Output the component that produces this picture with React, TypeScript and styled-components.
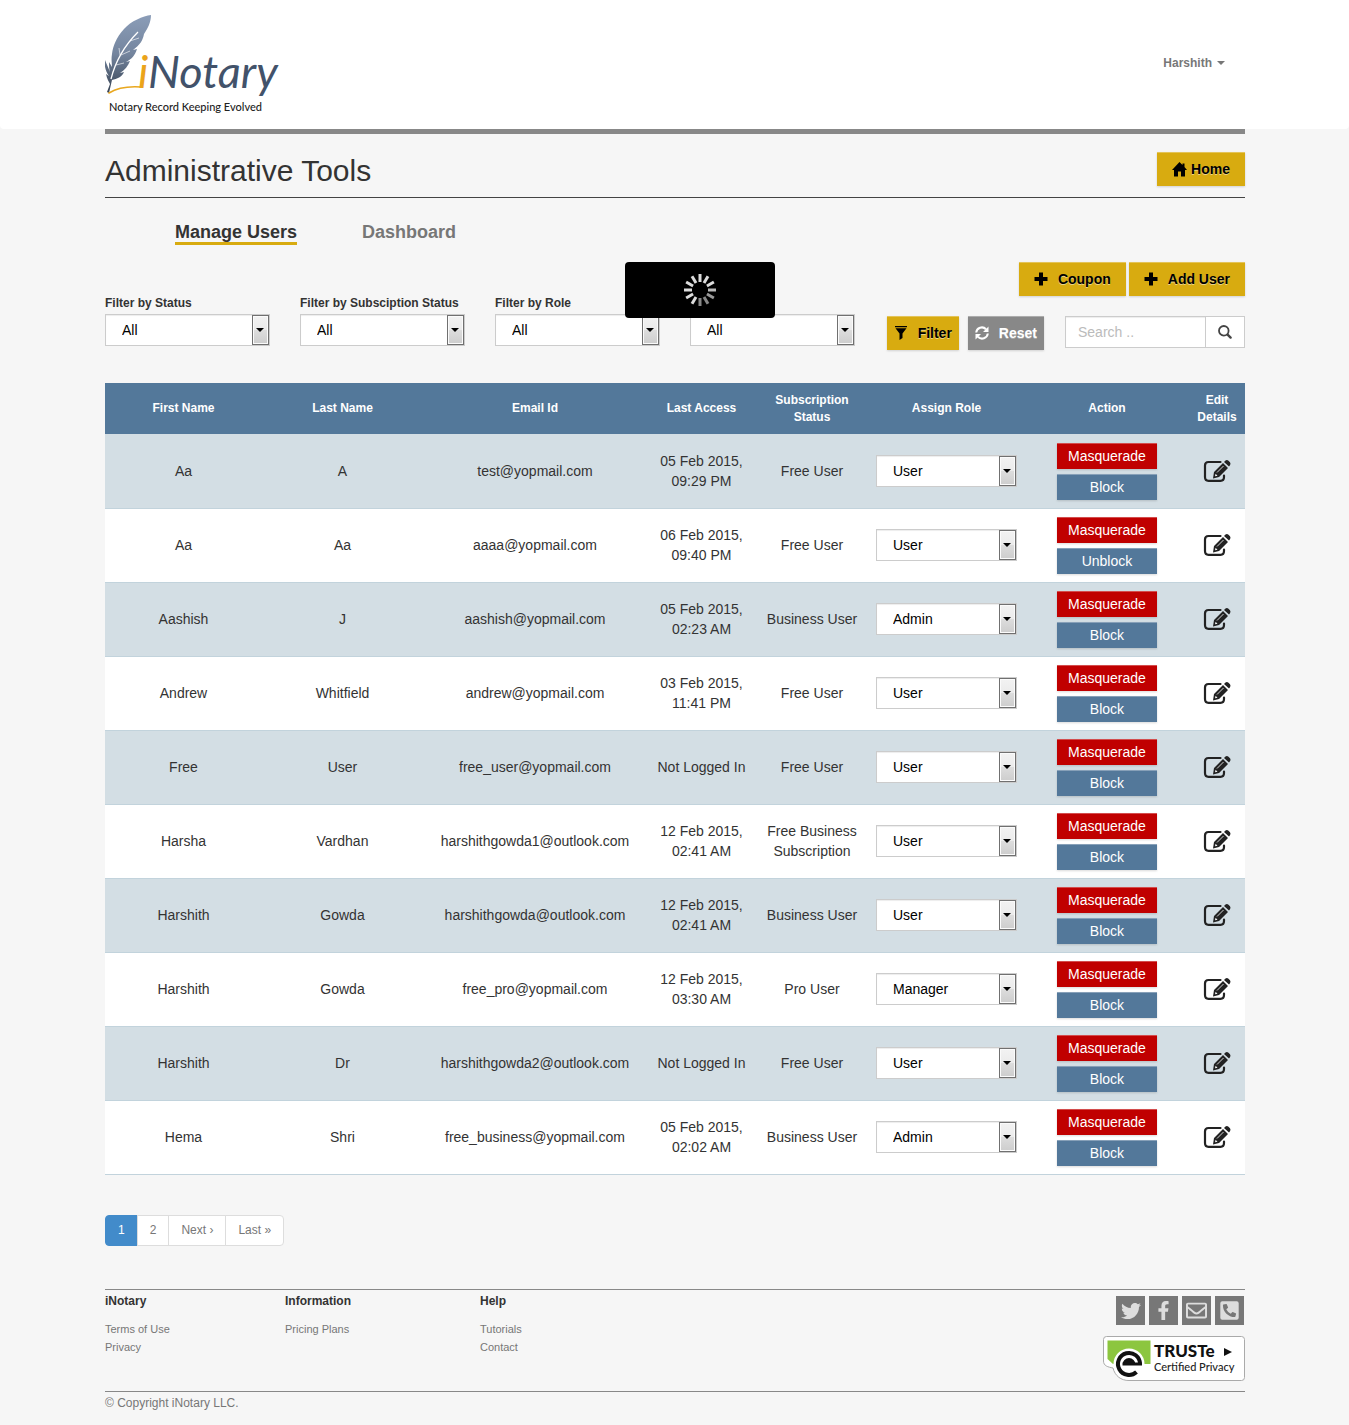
import React from "react";
import styled, { createGlobalStyle } from "styled-components";
import { FaTwitter, FaFacebookF, FaRegEnvelope, FaPhoneSquareAlt } from "react-icons/fa";

const GlobalStyle = createGlobalStyle`
  *, *::before, *::after { box-sizing: border-box; }
  body {
    margin: 0;
    background: #f6f6f6;
    color: #333;
    font-family: "Liberation Sans", Arial, sans-serif;
    font-size: 14px;
    line-height: 20px;
  }
  a { color: inherit; text-decoration: none; }
  button, input, select { font: inherit; color: inherit; margin: 0; }
`;

const Container = styled.div`
  max-width: 1171px;
  margin: 0 auto;
  padding: 0 15px 0 16px;
`;

const Header = styled.header`
  background: #fff;
  border-radius: 0 0 4px 4px;
`;

const HeaderRow = styled(Container)`
  display: flex;
  justify-content: space-between;
  align-items: flex-start;
  height: 129px;
  padding-top: 12px;
`;

const UserMenu = styled.button`
  display: flex;
  align-items: center;
  gap: 5px;
  margin: 41px 20px 0 0;
  padding: 0;
  border: 0;
  background: none;
  color: #777;
  font-size: 12px;
  font-weight: bold;
`;

const Caret = styled.span`
  border: 4px solid transparent;
  border-top-color: currentColor;
  border-bottom: 0;
`;

const TitleBar = styled.div`
  display: flex;
  justify-content: space-between;
  align-items: flex-end;
  border-top: 5px solid #888;
  border-bottom: 1px solid #444;
  padding: 18px 0 11px;
`;

const Title = styled.h1`
  margin: 0;
  font-size: 30px;
  line-height: 30px;
  font-weight: normal;
`;

const tones = {
  gold: { bg: "#d8ab10", fg: "#000", shadow: "rgba(255,255,255,.5)", weight: "bold" },
  grey: { bg: "#888", fg: "#fff", shadow: "rgba(255,255,255,.3)", weight: "bold" },
  red: { bg: "#c00000", fg: "#fff", shadow: "transparent", weight: "normal" },
  blue: { bg: "#53789a", fg: "#fff", shadow: "transparent", weight: "normal" },
};
type Tone = keyof typeof tones;

const Button = styled.button<{ $tone: Tone; $pad?: number; $gap?: number }>`
  display: inline-flex;
  align-items: center;
  justify-content: center;
  gap: ${(p) => p.$gap ?? 10}px;
  height: 34px;
  padding: 0 ${(p) => p.$pad ?? 15}px;
  border: 0;
  background: ${(p) => tones[p.$tone].bg};
  color: ${(p) => tones[p.$tone].fg};
  font-weight: ${(p) => tones[p.$tone].weight};
  text-shadow: 0 1px 0 ${(p) => tones[p.$tone].shadow};
  box-shadow: inset 0 1px 0 rgba(255, 255, 255, 0.3), 0 1px 2px rgba(0, 0, 0, 0.15);
  white-space: nowrap;
`;

const SmallButton = styled(Button)`
  width: 100px;
  height: 26px;
  padding: 0;
`;

const Tabs = styled.nav`
  display: flex;
  gap: 65px;
  padding: 24px 70px 17px;
`;

const Tab = styled.a<{ $active?: boolean }>`
  font-size: 18px;
  line-height: 20px;
  font-weight: bold;
  color: ${(p) => (p.$active ? "#333" : "#777")};
  border-bottom: 3px solid ${(p) => (p.$active ? "#d8ab10" : "transparent")};
`;

const Toolbar = styled.form`
  display: flex;
  justify-content: space-between;
  align-items: flex-start;
  position: relative;
  height: 121px;
`;

const Filters = styled.div`
  display: flex;
  gap: 30px;
  padding-top: 33px;
`;

const Field = styled.div`
  display: flex;
  flex-direction: column;
  gap: 3px;
  width: 165px;
`;

const Label = styled.label`
  font-size: 12px;
  line-height: 16px;
  font-weight: bold;
`;

const SelectBox = styled.span`
  display: block;
  position: relative;
  width: 100%;
  height: 32px;
  &::before {
    content: "";
    position: absolute;
    top: 1px;
    right: 1px;
    width: 17px;
    height: 30px;
    border: 1px solid #707070;
    box-shadow: inset 0 0 0 1px #fbfbfb;
    background: linear-gradient(#f2f2f2, #ebebeb 50%, #dddddd 50%, #cdcdcd);
    pointer-events: none;
  }
  &::after {
    content: "";
    position: absolute;
    top: 14px;
    right: 6px;
    border: 4px solid transparent;
    border-top-color: #000;
    border-bottom: 0;
    pointer-events: none;
  }
`;

const SelectControl = styled.select`
  appearance: none;
  display: block;
  width: 100%;
  height: 32px;
  padding: 0 24px 0 16px;
  border: 1px solid #ccc;
  border-radius: 0;
  background: #fff;
  color: #000;
  box-shadow: inset 0 1px 1px rgba(0, 0, 0, 0.075);
`;

const Tools = styled.div`
  display: flex;
  flex-direction: column;
  align-items: flex-end;
  gap: 20px;
`;

const ToolRow = styled.div<{ $gap: number }>`
  display: flex;
  align-items: flex-start;
  gap: ${(p) => p.$gap}px;
`;

const SearchGroup = styled.div`
  display: flex;
  width: 180px;
  height: 32px;
  margin-left: 12px;
  border: 1px solid #ccc;
  background: #fff;
  box-shadow: inset 0 1px 1px rgba(0, 0, 0, 0.075);
`;

const SearchInput = styled.input`
  flex: 1;
  min-width: 0;
  padding: 0 12px;
  border: 0;
  background: none;
  &::placeholder { color: #bbb; opacity: 1; }
`;

const SearchButton = styled.button`
  display: flex;
  align-items: center;
  justify-content: center;
  width: 39px;
  padding: 0;
  border: 0;
  border-left: 1px solid #ccc;
  background: #fff;
  color: #444;
`;

const Loader = styled.div`
  position: absolute;
  top: 0;
  left: 520px;
  display: flex;
  align-items: center;
  justify-content: center;
  width: 150px;
  height: 56px;
  border-radius: 4px;
  background: #000;
`;

const Table = styled.table`
  width: 100%;
  table-layout: fixed;
  border-collapse: separate;
  border-spacing: 0;
  text-align: center;
`;

const Th = styled.th`
  height: 52px;
  padding: 0 8px;
  background: #53789a;
  border-bottom: 1px solid #d3dee4;
  color: #fff;
  font-size: 12px;
  line-height: 17px;
`;

const Row = styled.tr`
  background: #fff;
  &:nth-child(odd) { background: #d3dee4; }
`;

const Td = styled.td`
  padding: 7px 8px 9px;
  border-bottom: 1px solid #c2d3dc;
`;

const ActionTd = styled(Td)`
  padding: 8px;
`;

const Actions = styled.div`
  display: flex;
  flex-direction: column;
  align-items: center;
  gap: 5px;
`;

const IconLink = styled.a`
  display: flex;
  justify-content: center;
  color: #222;
`;

const Pager = styled.nav`
  display: flex;
  padding: 40px 0 43px;
`;

const PageLink = styled.a<{ $active?: boolean }>`
  padding: 6px 12px;
  margin-left: -1px;
  border: 1px solid ${(p) => (p.$active ? "#428bca" : "#ddd")};
  background: ${(p) => (p.$active ? "#428bca" : "#fff")};
  color: ${(p) => (p.$active ? "#fff" : "#777")};
  font-size: 12px;
  line-height: 17px;
  &:first-child { margin-left: 0; border-radius: 4px 0 0 4px; }
  &:last-child { border-radius: 0 4px 4px 0; }
`;

const FooterTop = styled.div`
  display: flex;
  height: 103px;
  border-top: 1px solid #888;
  border-bottom: 1px solid #888;
`;

const FooterColumn = styled.div<{ $width: number }>`
  display: flex;
  flex-direction: column;
  width: ${(p) => p.$width}px;
  font-size: 11px;
  line-height: 18px;
  color: #777;
`;

const FooterHeading = styled.h2`
  margin: 3px 0 10px;
  color: #333;
  font-size: 12px;
  line-height: 17px;
`;

const FooterAside = styled.div`
  display: flex;
  flex-direction: column;
  align-items: flex-end;
  gap: 11px;
  margin-left: auto;
  padding-top: 6px;
`;

const Social = styled.div`
  display: flex;
  gap: 4px;
  padding-right: 1px;
`;

const SocialLink = styled.a`
  display: flex;
  align-items: center;
  justify-content: center;
  width: 29px;
  height: 29px;
  background: #777;
  color: #ddd;
`;

const Copyright = styled.p`
  margin: 0;
  padding: 3px 0 13px;
  color: #777;
  font-size: 12px;
  line-height: 17px;
`;

const Logo = () => (
  <svg width="178" height="106" viewBox="0 0 178 106" role="img" aria-label="iNotary">
    <defs>
      <linearGradient id="quill" x1="0" y1="0" x2="0" y2="1">
        <stop offset="0" stopColor="#8b9db8" />
        <stop offset="0.5" stopColor="#74859e" />
        <stop offset="1" stopColor="#364253" />
      </linearGradient>
    </defs>
    <path
      fill="url(#quill)"
      d="M46 3C38 4 26 9 19 17C11 26 8 34 7 42C6 48 7 51 7 55L4 50C4 54 4 57 5 60L0 48C-1 55 1 60 4 64L1 62C2 67 4 70 5 72L2 80L4 81L7 68C12 67 17 65 19 60L15 61C20 58 23 54 25 49L21 50C27 47 30 43 32 37L28 38C35 33 38 28 39 22C43 16 46 10 46 3Z"
    />
    <path fill="none" stroke="#fff" strokeWidth="1.300" d="M6 67C10 51 18 35 33 20" />
    <path fill="none" stroke="#fff" strokeWidth="0.600" d="M15 43L14 36M16 43L25 39M25 29L34 26M11 53L19 51" />
    <path fill="none" stroke="#e9a820" strokeWidth="1.600" strokeLinecap="round" d="M4 81C12 76 22 74 36 75" />
    <text x="33" y="76" fontFamily="Lato, sans-serif" fontStyle="italic" fontSize="45">
      <tspan fill="#eba41a">i</tspan>
      <tspan fill="#42526a">Notary</tspan>
    </text>
    <text x="4" y="99" fill="#222" fontFamily="Lato, sans-serif" fontWeight="500" fontSize="11">
      Notary Record Keeping Evolved
    </text>
  </svg>
);

const HomeIcon = () => (
  <svg width="15" height="15" viewBox="0 0 15 15" fill="currentColor" aria-hidden="true">
    <path d="M7.500 0L10.500 3V1.500H12.500V5L15 8H13V14.500H9V9.500H6V14.500H2V8H0Z" />
  </svg>
);
const PlusIcon = () => (
  <svg width="14" height="14" viewBox="0 0 14 14" fill="currentColor" aria-hidden="true">
    <path d="M5 0.500H9V5H13.500V9H9V13.500H5V9H0.500V5H5Z" />
  </svg>
);
const FilterIcon = () => (
  <svg width="14" height="14" viewBox="0 0 14 14" fill="currentColor" aria-hidden="true">
    <path d="M1 0H13V1.200H1ZM1.500 2.200H12.500L8.500 7.500V12L5.500 14V7.500Z" />
  </svg>
);
const RefreshIcon = () => (
  <svg width="14" height="14" viewBox="0 0 14 14" fill="none" stroke="currentColor" strokeWidth="2" aria-hidden="true">
    <path d="M1.200 6.500A5.700 5.700 0 0 1 11 3.200M12.800 7.500A5.700 5.700 0 0 1 3 10.800" />
    <path fill="currentColor" stroke="none" d="M13.500 0.500V6H8ZM0.500 13.500V8H6Z" />
  </svg>
);
const SearchIcon = () => (
  <svg width="14" height="14" viewBox="0 0 14 14" fill="none" stroke="currentColor" aria-hidden="true">
    <circle cx="5.800" cy="5.800" r="4.800" strokeWidth="1.800" />
    <path strokeWidth="2.400" strokeLinecap="round" d="M9.600 9.600L12.600 12.600" />
  </svg>
);
const EditIcon = () => (
  <svg width="28" height="24" viewBox="0 0 28 24" aria-hidden="true">
    <path fill="none" stroke="currentColor" strokeWidth="2.200" strokeLinecap="round" d="M17.500 3H5.500Q2 3 2 6.500V18Q2 21.800 5.500 21.800H17.500Q21 21.800 21 18V16.500" />
    <path fill="currentColor" d="M10 19.500L11 13L20 4L25 9L16 18ZM21 3L22.500 1.500Q24 0.500 25.500 1.800L27 3.300Q28 4.800 27 6.200L26 7.500Z" />
    <path fill="none" stroke="#fff" strokeWidth="0.800" d="M14 13.500L20.500 7" />
    <path fill="#fff" d="M12 17.300L12.600 14.800L14.500 16.700Z" />
  </svg>
);
const Spinner = () => (
  <svg width="34" height="34" viewBox="-17 -17 34 34" aria-hidden="true">
    {Array.from({ length: 12 }, (_, i) => (
      <rect
        key={i}
        x="-1.500"
        y="-16"
        width="3"
        height="8"
        fill={i < 3 || i > 6 ? "#ddd" : ["#bbb", "#999", "#888", "#888"][i - 3]}
        transform={`rotate(${i * 30})`}
      />
    ))}
  </svg>
);
const TrusteBadge = () => (
  <svg width="142" height="46" viewBox="0 0 142 46" role="img" aria-label="TRUSTe Certified Privacy">
    <path fill="#fff" stroke="#aaa" d="M3.500 0.500H138.500Q141.500 0.500 141.500 3.500V41.500Q141.500 44.500 138.500 44.500H26C18 44.500 12 40 10 32C5 31 0.500 30 0.500 25V3.500Q0.500 0.500 3.500 0.500Z" />
    <path fill="#8cc63f" d="M4.500 4.500H47.500V28H10L4.500 23Z" />
    <circle cx="26" cy="28" r="15.500" fill="#fff" />
    <path fill="none" stroke="#111" strokeWidth="4" d="M37 28A11 11 0 1 0 33.500 36" />
    <path fill="#111" d="M19.500 28.500A6.500 6.500 0 0 1 32.500 28.500ZM19.500 26.500H39V29.500H19.500Z" />
    <text x="51" y="21" fill="#111" fontFamily="Lato, sans-serif" fontWeight="900" fontSize="17">TRUSTe</text>
    <path fill="#111" d="M121 12L129 16L121 20Z" />
    <text x="51" y="35" fill="#222" fontFamily="Lato, sans-serif" fontWeight="500" fontSize="11">Certified Privacy</text>
  </svg>
);

const Select = ({ id, label, value, options }: { id: string; label?: string; value: string; options: string[] }) => (
  <SelectBox>
    <SelectControl id={id} aria-label={label} defaultValue={value}>
      {options.map((o) => (
        <option key={o}>{o}</option>
      ))}
    </SelectControl>
  </SelectBox>
);

const filters = [
  { id: "status", label: "Filter by Status", options: ["All", "Active", "Blocked"] },
  { id: "subscription", label: "Filter by Subsciption Status", options: ["All", "Free User", "Pro User", "Business User"] },
  { id: "role", label: "Filter by Role", options: ["All", "User", "Manager", "Admin"] },
];

const columns: [string, number][] = [
  ["First Name", 157],
  ["Last Name", 161],
  ["Email Id", 224],
  ["Last Access", 109],
  ["Subscription Status", 112],
  ["Assign Role", 157],
  ["Action", 164],
  ["Edit Details", 56],
];

const users = [
  ["Aa", "A", "test@yopmail.com", "05 Feb 2015, 09:29 PM", "Free User", "User", "Block"],
  ["Aa", "Aa", "aaaa@yopmail.com", "06 Feb 2015, 09:40 PM", "Free User", "User", "Unblock"],
  ["Aashish", "J", "aashish@yopmail.com", "05 Feb 2015, 02:23 AM", "Business User", "Admin", "Block"],
  ["Andrew", "Whitfield", "andrew@yopmail.com", "03 Feb 2015, 11:41 PM", "Free User", "User", "Block"],
  ["Free", "User", "free_user@yopmail.com", "Not Logged In", "Free User", "User", "Block"],
  ["Harsha", "Vardhan", "harshithgowda1@outlook.com", "12 Feb 2015, 02:41 AM", "Free Business Subscription", "User", "Block"],
  ["Harshith", "Gowda", "harshithgowda@outlook.com", "12 Feb 2015, 02:41 AM", "Business User", "User", "Block"],
  ["Harshith", "Gowda", "free_pro@yopmail.com", "12 Feb 2015, 03:30 AM", "Pro User", "Manager", "Block"],
  ["Harshith", "Dr", "harshithgowda2@outlook.com", "Not Logged In", "Free User", "User", "Block"],
  ["Hema", "Shri", "free_business@yopmail.com", "05 Feb 2015, 02:02 AM", "Business User", "Admin", "Block"],
];

export default function App() {
  return (
    <>
      <GlobalStyle />
      <Header>
        <HeaderRow>
          <a href="#home"><Logo /></a>
          <UserMenu type="button">Harshith <Caret /></UserMenu>
        </HeaderRow>
      </Header>
      <Container as="main">
        <TitleBar>
          <Title>Administrative Tools</Title>
          <Button type="button" $tone="gold" $gap={4}><HomeIcon />Home</Button>
        </TitleBar>
        <Tabs>
          <Tab href="#users" $active>Manage Users</Tab>
          <Tab href="#dashboard">Dashboard</Tab>
        </Tabs>
        <Toolbar onSubmit={(e) => e.preventDefault()}>
          <Filters>
            {filters.map((f) => (
              <Field key={f.id}>
                <Label htmlFor={f.id}>{f.label}</Label>
                <Select id={f.id} value="All" options={f.options} />
              </Field>
            ))}
            <Field>
              <Label as="span">&nbsp;</Label>
              <Select id="access" label="Filter by Access" value="All" options={["All"]} />
            </Field>
          </Filters>
          <Tools>
            <ToolRow $gap={3}>
              <Button type="button" $tone="gold"><PlusIcon />Coupon</Button>
              <Button type="button" $tone="gold"><PlusIcon />Add User</Button>
            </ToolRow>
            <ToolRow $gap={9}>
              <Button type="submit" $tone="gold" $pad={7}><FilterIcon />Filter</Button>
              <Button type="reset" $tone="grey" $pad={7}><RefreshIcon />Reset</Button>
              <SearchGroup>
                <SearchInput type="text" aria-label="Search" placeholder="Search .." />
                <SearchButton type="button" aria-label="Search"><SearchIcon /></SearchButton>
              </SearchGroup>
            </ToolRow>
          </Tools>
          <Loader role="status" aria-label="Loading"><Spinner /></Loader>
        </Toolbar>
        <Table>
          <colgroup>
            {columns.map(([name, width]) => (
              <col key={name} style={{ width: `${(width / 1140) * 100}%` }} />
            ))}
          </colgroup>
          <thead>
            <tr>
              {columns.map(([name]) => (
                <Th key={name} scope="col">{name}</Th>
              ))}
            </tr>
          </thead>
          <tbody>
            {users.map(([first, last, email, access, plan, role, action]) => (
              <Row key={email}>
                <Td>{first}</Td>
                <Td>{last}</Td>
                <Td>{email}</Td>
                <Td>{access}</Td>
                <Td>{plan}</Td>
                <Td>
                  <Select id={`role-${email}`} label={`Role of ${email}`} value={role} options={["User", "Manager", "Admin"]} />
                </Td>
                <ActionTd>
                  <Actions>
                    <SmallButton type="button" $tone="red">Masquerade</SmallButton>
                    <SmallButton type="button" $tone="blue">{action}</SmallButton>
                  </Actions>
                </ActionTd>
                <Td>
                  <IconLink href="#edit" aria-label={`Edit ${email}`}><EditIcon /></IconLink>
                </Td>
              </Row>
            ))}
          </tbody>
        </Table>
        <Pager aria-label="Pages">
          <PageLink href="#1" $active>1</PageLink>
          <PageLink href="#2">2</PageLink>
          <PageLink href="#next">Next ›</PageLink>
          <PageLink href="#last">Last »</PageLink>
        </Pager>
      </Container>
      <Container as="footer">
        <FooterTop>
          <FooterColumn $width={180}>
            <FooterHeading>iNotary</FooterHeading>
            <a href="#terms">Terms of Use</a>
            <a href="#privacy">Privacy</a>
          </FooterColumn>
          <FooterColumn $width={195}>
            <FooterHeading>Information</FooterHeading>
            <a href="#pricing">Pricing Plans</a>
          </FooterColumn>
          <FooterColumn $width={195}>
            <FooterHeading>Help</FooterHeading>
            <a href="#tutorials">Tutorials</a>
            <a href="#contact">Contact</a>
          </FooterColumn>
          <FooterAside>
            <Social>
              <SocialLink href="#twitter" aria-label="Twitter"><FaTwitter size={20} /></SocialLink>
              <SocialLink href="#facebook" aria-label="Facebook"><FaFacebookF size={19} /></SocialLink>
              <SocialLink href="#mail" aria-label="Email"><FaRegEnvelope size={21} /></SocialLink>
              <SocialLink href="#phone" aria-label="Phone"><FaPhoneSquareAlt size={21} /></SocialLink>
            </Social>
            <TrusteBadge />
          </FooterAside>
        </FooterTop>
        <Copyright>© Copyright iNotary LLC.</Copyright>
      </Container>
    </>
  );
}
